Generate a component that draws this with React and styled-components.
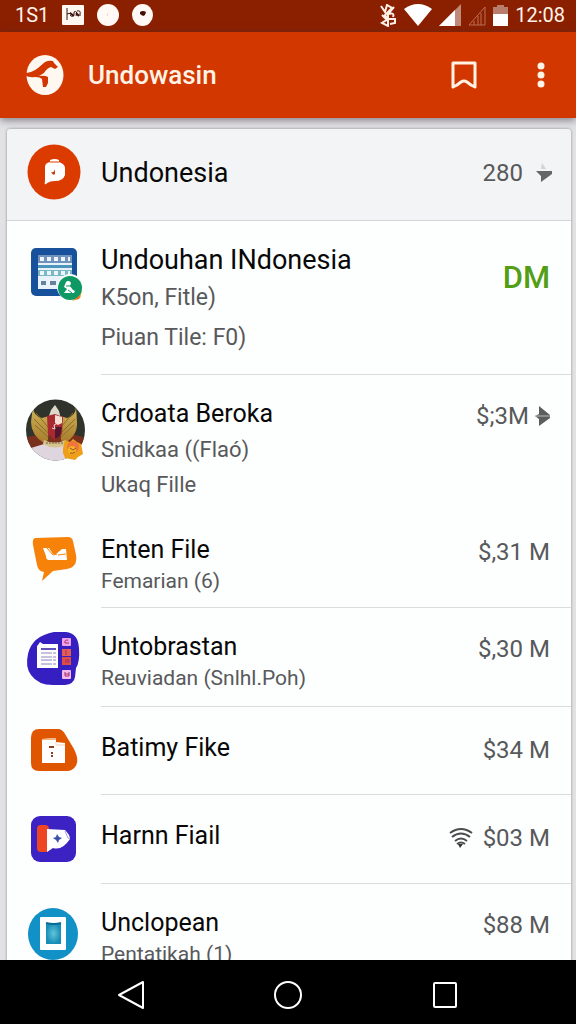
import React from "react";
import styled, { createGlobalStyle } from "styled-components";

const GlobalStyle = createGlobalStyle`
  * { box-sizing: border-box; }
  body { margin: 0; background: #e2e2e4; font-family: Roboto, "Liberation Sans", sans-serif; }
  button { border: 0; padding: 0; background: none; color: inherit; cursor: pointer; }
  svg { display: block; }
`;

const Screen = styled.div`
  display: flex;
  flex-direction: column;
  height: 100vh;
  overflow: hidden;
`;

const StatusBar = styled.div`
  flex: none;
  display: flex;
  align-items: center;
  justify-content: space-between;
  height: 32px;
  padding: 0 11px 2px 15px;
  background: #8b2000;
  color: #fff3ea;
  font-size: 20px;
  line-height: 28px;
`;

const StatusGroup = styled.div`
  display: flex;
  align-items: center;
  gap: ${(p) => p.$gap}px;
`;

const AppBar = styled.header`
  flex: none;
  position: relative;
  display: flex;
  align-items: center;
  height: 86px;
  padding: 0 16px 0 24px;
  background: #d33700;
  color: #fff3e6;
  box-shadow: 0 2px 8px rgba(60, 50, 60, 0.6);
`;

const AppTitle = styled.h1`
  flex: 1;
  margin: 0 0 0 23px;
  font-size: 26px;
  line-height: 36px;
  font-weight: 500;
`;

const BarButton = styled.button`
  display: grid;
  place-items: center;
  width: 38px;
  height: 48px;
  margin-left: 39px;
`;

const Content = styled.main`
  flex: 1;
  min-height: 0;
  overflow: hidden;
  padding: 11px 5px 0 7px;
`;

const Card = styled.section`
  background: #fdfefe;
  border-radius: 4px 4px 0 0;
  box-shadow: 0 0 3px rgba(0, 0, 0, 0.4);
`;

const CardHeader = styled.div`
  display: flex;
  align-items: center;
  height: 92px;
  padding-bottom: 4px;
  background: #f3f4f5;
  border-bottom: 1px solid #d3d5d7;
  border-radius: 4px 4px 0 0;
`;

const List = styled.ul`
  margin: 0;
  padding: 0;
  list-style: none;
`;

const Row = styled.li`
  display: flex;
  min-height: ${(p) => p.$height}px;
`;

const IconCell = styled.div`
  flex: none;
  width: 94px;
  display: flex;
  justify-content: center;
  padding-top: ${(p) => (p.$flush ? 0 : 20)}px;
`;

const RowBody = styled.div`
  flex: 1;
  display: flex;
  justify-content: space-between;
  padding: ${(p) => (p.$single ? 23 : 21)}px 21px 0 0;
  border-bottom: 1px solid ${(p) => (p.$divider ? "#dadcdd" : "transparent")};
`;

const Title = styled.h2`
  flex: ${(p) => (p.$grow ? 1 : "none")};
  margin: 0;
  color: #080808;
  font-size: ${(p) => (p.$large ? 27 : 25)}px;
  line-height: 36px;
  font-weight: 400;
`;

const Detail = styled.p`
  margin: 0;
  color: #58595b;
  font-size: ${(p) => p.$font}px;
  line-height: ${(p) => p.$line}px;
`;

const Size = styled.div`
  display: flex;
  align-items: center;
  align-self: flex-start;
  gap: ${(p) => p.$gap || 10}px;
  padding-top: ${(p) => p.$top || 0}px;
  color: #58595b;
  font-size: 24px;
  line-height: 40px;
`;

const HeaderSize = styled(Size)`
  align-self: center;
  padding-right: 19px;
`;

const Badge = styled.strong`
  color: #539e16;
  font-size: 31px;
  font-weight: 500;
`;

const NavBar = styled.nav`
  flex: none;
  display: grid;
  grid-template-columns: repeat(3, 1fr);
  height: 64px;
  padding: 0 9%;
  background: #000;
  color: #fff;
`;

const NavButton = styled.button`
  display: grid;
  place-items: center;
  padding-top: 5px;
`;

const Art = ({ y, children }) => (
  <svg width="62" height="66" viewBox={`23 ${y} 62 66`} aria-hidden="true">{children}</svg>
);

const CalendarArt = () => (
  <Art y={241}>
    <rect x="31" y="248" width="46" height="48" rx="5" fill="#17519c" />
    <rect x="38" y="255" width="34" height="34" fill="#e9f2f8" />
    <path d="M38 255h34v8H38z" fill="#7192bd" />
    <path d="M38 265h34v3H38z" fill="#4e95bd" />
    <path d="M38 270h34v6H38z" fill="#78b8c7" />
    <path d="M40 259h30M40 273h30M40 283h14" stroke="#eef6fb" strokeWidth="4" strokeDasharray="4 3" />
    <path d="M41 281h5v4h-5zM50 281h6v4h-6z" fill="#68809f" />
    <path d="M70 300l10-2 2-8-5 0z" fill="#f0a52d" />
    <circle cx="70" cy="287" r="13" fill="#f4fbf7" />
    <path d="M72 301l8-3 2-8z" fill="#efa02d" />
    <circle cx="70" cy="288" r="12" fill="#0d9864" />
    <path d="M75 300l4-1 1-4z" fill="#ef6a25" />
    <path d="M66 282a3 3 0 0 1 5 1l-1 3 3 4 2 1-1 2H64l3-4-3-2z" fill="#fff" />
    <path d="M66 286h5M68 290l4 3" stroke="#0d9864" />
  </Art>
);

const GarudaArt = () => (
  <Art y={395}>
    <defs>
      <clipPath id="garuda"><ellipse cx="55.500" cy="430" rx="29.500" ry="30.500" /></clipPath>
      <linearGradient id="wing" x2="0" y2="1"><stop stopColor="#d2b65c" /><stop offset="1" stopColor="#a77b2b" /></linearGradient>
    </defs>
    <g clipPath="url(#garuda)">
      <path d="M24 398h62v64H24z" fill="#30332c" />
      <path d="M24 438l17-4h30l16 4v12H24z" fill="#79301c" />
      <path d="M24 450l20-6h25l17 7v12H24z" fill="#ded5df" />
      <path d="M33 406q0 10 9 12l7-2-1 24-4 3q-13-8-13-21zM76 406q0 10-9 12l-7-2 1 24 4 3q13-8 12-21z" fill="url(#wing)" />
      <path d="M36 413l12 14M34 419l14 14M35 425l13 12M73 413l-12 14M75 419l-14 14M74 425l-13 12" stroke="#8c6d2c" strokeWidth="1" />
      <path d="M51 410l4-5 4 6 2 8H48z" fill="#ddd9c8" />
      <path d="M47 416l8-2 8 3-1 17-7 6-7-6z" fill="#a92931" />
      <path d="M55 415l7 2v6l-4 2-3-2z" fill="#f2dfcf" />
      <path d="M55 427h7l-2 9-5 3z" fill="#50162b" />
      <path d="M52 428l3 1-1-4 4-2" fill="none" stroke="#f1d8d8" strokeWidth="1" />
      <path d="M44 440q10 5 22 0l1 4q-12 7-24 0z" fill="#d6c48d" />
      <path d="M46 443h18" stroke="#776140" strokeDasharray="2 1" />
    </g>
    <path d="M65 440l5 2 3-3 4 3 4 2 1 5 1 5-5 3-3 3-5-1-5-1-2-5v-5z" fill="#ed9f19" />
    <circle cx="73" cy="447" r="6" fill="#ef743d" />
    <circle cx="72" cy="450" r="4" fill="#f6b126" />
    <path d="M70 448l3 2 3-2M70 453q3 1 5-1" fill="none" stroke="#8e541d" />
  </Art>
);

const ChatArt = () => (
  <Art y={531}>
    <path d="M35 538l33-1q4 0 5 4l3 14q2 12-9 14l-14 2-11 10 2-9q-6-1-7-7l-4-20q-1-6 2-7z" fill="#f78209" />
    <path d="M43 548l6 0 4 6h3l6-5h4l1 11H49q-3 0-3-4z" fill="#fff" />
    <path d="M47 548l6 7 4-1M58 555l8-1" fill="none" stroke="#f78209" />
  </Art>
);

const NotesArt = () => (
  <Art y={628}>
    <path d="M54 632h12q12 1 13 16 1 14-3 20l-1 9q-1 7-10 8H53q-15 0-22-10-6-8-3-21 4-18 26-22z" fill="#351fc0" />
    <path d="M38 645l2-3 3 2h15v24H37V646z" fill="#fff" />
    <path d="M41 649h15" stroke="#6252bd" strokeWidth="2" />
    <path d="M41 653h15M41 657h15M41 660h15M41 664h15" stroke="#8b86bf" strokeDasharray="11 1" />
    <rect x="62" y="638" width="9" height="8" rx="1" fill="#f0a2e5" />
    <rect x="62" y="649" width="9" height="7" fill="#e45d53" />
    <rect x="62" y="657" width="9" height="8" fill="#df4c43" />
    <rect x="62" y="670" width="9" height="9" rx="1" fill="#f4b9e9" />
    <path d="M68 640q-4 0-3 3h4M66 650v5M65 660h4v2h-4M65 672v4h4v-4M65 674h4" fill="none" stroke="#a33175" />
  </Art>
);

const DocumentArt = () => (
  <Art y={728}>
    <path d="M39 730h19q4 0 7 5l9 15q6 12 1 18-3 4-8 4H39q-8 0-8-8v-25q0-9 8-9z" fill="#e05600" />
    <path d="M42 740l14-1v4l9 1v20H42z" fill="#fff" />
    <path d="M42 740l14-1v2H42z" fill="#f3b482" />
    <path d="M49 748h5M51 754h2M51 757h2" stroke="#8d3d20" strokeWidth="2" />
    <path d="M56 743v3h9" fill="none" stroke="#f4d0bb" />
  </Art>
);

const RocketArt = () => (
  <Art y={816}>
    <rect x="31" y="817" width="45" height="46" rx="9" fill="#3c22c2" />
    <rect x="37" y="826" width="12" height="27" rx="4" fill="#ee4625" />
    <path d="M47 830l18 1q5 5 5 9-8 12-17 9l-6 4z" fill="#fff" />
    <path d="M57 835l2 3 3 1-3 2-1 3-2-3-3-2 3-1z" fill="#3a4fae" />
    <path d="M65 832l3 7 2 1" fill="none" stroke="#9c9de2" />
  </Art>
);

const PhoneArt = () => (
  <Art y={905}>
    <defs><radialGradient id="screen"><stop stopColor="#61c4d9" /><stop offset="1" stopColor="#168db7" /></radialGradient></defs>
    <ellipse cx="53" cy="935" rx="25" ry="26" fill="#1291c6" />
    <rect x="40" y="918" width="26" height="33" rx="1" fill="#fff" />
    <rect x="46" y="924" width="15" height="21" fill="url(#screen)" />
    <path d="M46 924q8 2 15 0" fill="none" stroke="#086b95" strokeWidth="2" />
  </Art>
);

const ProfileArt = () => (
  <Art y={140}>
    <ellipse cx="54" cy="172" rx="26.500" ry="27.500" fill="#dc3b00" />
    <path d="M50 160q5-2 9 0v2q6 2 6 6v7q-2 6-10 6-6 0-9 3-2 1-1-3v-14q0-4 5-5z" fill="#fff" />
    <path d="M50 162h9" stroke="#dc3b00" />
    <path d="M51 172q3 1 4-3v5q-2 2-4-2z" fill="#c63c13" />
  </Art>
);

const Brand = () => (
  <svg width="41" height="42" viewBox="24 54 41 42" aria-hidden="true">
    <ellipse cx="45" cy="75" rx="18.500" ry="20" fill="#fff8f0" />
    <path d="M24 73q8 0 14-5l7-6q4-2 8-1l1 2 4 4-3 2-4-2q-4 1-7 6l-5 3q6-1 9 1v6l-2 4h-3l-1-8q-2-2-7-2-5 1-11-2z" fill="#d33700" />
  </svg>
);

const HeaderArrow = () => (
  <svg width="16" height="20" viewBox="0 0 16 20" aria-hidden="true">
    <path d="M6 0l4 6-5 0z" fill="#d2d3d4" /><path d="M0 8h16v3L5 19V13z" fill="#656668" />
  </svg>
);

const RowArrow = () => (
  <svg width="15" height="20" viewBox="0 0 15 20" aria-hidden="true">
    <path d="M4 0l11 9v3L4 20v-7L0 10l4-2z" fill="#5c5d5f" /><path d="M0 10h15" stroke="#bcbcbc" />
  </svg>
);

const WifiIcon = () => (
  <svg width="24" height="22" viewBox="0 0 24 22" fill="none" stroke="#4b4c4e" strokeWidth="2" aria-hidden="true">
    <path d="M1 6q11-8 22 0M3 10q9-7 18 0M6 14q6-5 12 0M8 17q4-3 8 0" />
    <path d="M9 17h5l-3 4z" fill="#333" stroke="none" />
  </svg>
);

const items = [
  { icon: CalendarArt, title: "Undouhan INdonesia", large: true, details: ["K5on, Fitle)", "Piuan Tile: F0)"], line: 40, font: 23, badge: "DM", top: 16, height: 154, divider: true },
  { icon: GarudaArt, title: "Crdoata Beroka", details: ["Snidkaa ((Flaó)", "Ukaq Fille"], line: 35, font: 22, size: "$;3M", arrow: true, height: 136 },
  { icon: ChatArt, title: "Enten File", details: ["Femarian (6)"], line: 26, font: 21, size: "$,31 M", height: 97, divider: true },
  { icon: NotesArt, title: "Untobrastan", details: ["Reuviadan (Snlhl.Poh)"], line: 26, font: 21, size: "$,30 M", height: 99, divider: true },
  { icon: DocumentArt, title: "Batimy Fike", details: [], size: "$34 M", height: 88, divider: true },
  { icon: RocketArt, title: "Harnn Fiail", details: [], size: "$03 M", wifi: true, height: 89, divider: true },
  { icon: PhoneArt, title: "Unclopean", details: ["Pentatikah (1)"], line: 26, font: 21, size: "$88 M", height: 100, divider: true },
];

const FileRow = ({ item }) => {
  const Icon = item.icon;
  return (
    <Row $height={item.height}>
      <IconCell><Icon /></IconCell>
      <RowBody $divider={item.divider} $single={item.details.length === 0}>
        <div>
          <Title $large={item.large}>{item.title}</Title>
          {item.details.map((d) => <Detail key={d} $line={item.line} $font={item.font}>{d}</Detail>)}
        </div>
        <Size $top={item.top} $gap={item.arrow ? 6 : 10}>
          {item.wifi && <WifiIcon />}
          {item.badge ? <Badge>{item.badge}</Badge> : <span>{item.size}</span>}
          {item.arrow && <RowArrow />}
        </Size>
      </RowBody>
    </Row>
  );
};

export default function App() {
  return (
    <Screen>
      <GlobalStyle />
      <StatusBar>
        <StatusGroup $gap={13}>
          <span>1S1</span>
          <svg width="22" height="20" viewBox="0 0 22 20" aria-hidden="true">
            <rect width="22" height="20" rx="1" fill="#fff8f2" />
            <path d="M5 3v12M5 9l4-1M8 10q2 3 4 0V7M12 7q4-2 2 4M15 6q4-1 3 3v2" fill="none" stroke="#38100c" strokeWidth="1" />
            <path d="M8 8l4 3M14 8l3 3" stroke="#38100c" strokeWidth="2" />
          </svg>
          <svg width="22" height="22" viewBox="0 0 22 22" aria-hidden="true"><circle cx="11" cy="11" r="11" fill="#fffaf5" /><path d="M11 9l-1 3" stroke="#e5d8d0" /></svg>
          <svg width="21" height="22" viewBox="0 0 21 22" aria-hidden="true"><ellipse cx="10.500" cy="11" rx="10.500" ry="11" fill="#fffaf5" /><path d="M8 8q3-2 6 0l-1 3-2 1-3-2z" fill="#401009" /></svg>
        </StatusGroup>
        <StatusGroup $gap={7}>
          <svg width="18" height="23" viewBox="0 0 18 23" fill="none" stroke="#fff1e8" strokeWidth="2" aria-hidden="true">
            <path d="M2 2l4 6 2-7 5 3-7 7 3 4-6 4 6 3V8M9 10l6-7M9 10q7-2 5 3M10 15h6v4l-5 1M3 11l6 6" />
          </svg>
          <svg width="28" height="22" viewBox="0 0 28 22" aria-hidden="true"><path d="M0 5q14-10 28 0L14 22z" fill="#fff" /></svg>
          <svg width="22" height="22" viewBox="0 0 22 22" aria-hidden="true"><path d="M0 22L22 0v22z" fill="#be8b7a" /><path d="M0 22L16 6v16z" fill="#fff" /></svg>
          <svg width="18" height="21" viewBox="0 0 18 21" fill="none" stroke="#bd6e55" aria-hidden="true"><path d="M1 20L17 2v18zM6 16v4M10 11v9M13 8v12" /></svg>
          <svg width="15" height="21" viewBox="0 0 15 21" aria-hidden="true"><path d="M0 2h4V0h7v2h4v7H0z" fill="#b97d6d" /><path d="M0 9h15v12H0z" fill="#fff" /></svg>
          <time>12:08</time>
        </StatusGroup>
      </StatusBar>
      <AppBar>
        <Brand />
        <AppTitle>Undowasin</AppTitle>
        <BarButton aria-label="Bookmarks">
          <svg width="26" height="28" viewBox="0 0 26 28" fill="none" stroke="currentColor" strokeWidth="3" strokeLinejoin="round" aria-hidden="true"><path d="M2 2h22v24l-4-2-4-3q-3-2-6 0l-4 3-4 2z" /></svg>
        </BarButton>
        <BarButton aria-label="More options">
          <svg width="8" height="26" viewBox="0 0 8 26" fill="currentColor" aria-hidden="true"><circle cx="4" cy="4" r="3.500" /><circle cx="4" cy="13" r="3.500" /><circle cx="4" cy="22" r="3.500" /></svg>
        </BarButton>
      </AppBar>
      <Content>
        <Card>
          <CardHeader>
            <IconCell $flush><ProfileArt /></IconCell>
            <Title $grow $large>Undonesia</Title>
            <HeaderSize $gap={13}><span>280</span><HeaderArrow /></HeaderSize>
          </CardHeader>
          <List>{items.map((item) => <FileRow key={item.title} item={item} />)}</List>
        </Card>
      </Content>
      <NavBar>
        <NavButton aria-label="Back"><svg width="28" height="30" viewBox="0 0 28 30" fill="none" stroke="currentColor" strokeWidth="2" strokeLinejoin="round" aria-hidden="true"><path d="M26 2v26L2 15z" /></svg></NavButton>
        <NavButton aria-label="Home"><svg width="28" height="28" viewBox="0 0 28 28" fill="none" stroke="currentColor" strokeWidth="2" aria-hidden="true"><circle cx="14" cy="14" r="13" /></svg></NavButton>
        <NavButton aria-label="Recent apps"><svg width="26" height="26" viewBox="0 0 26 26" fill="none" stroke="currentColor" strokeWidth="2" aria-hidden="true"><rect x="2" y="1" width="22" height="24" rx="1" /></svg></NavButton>
      </NavBar>
    </Screen>
  );
}
